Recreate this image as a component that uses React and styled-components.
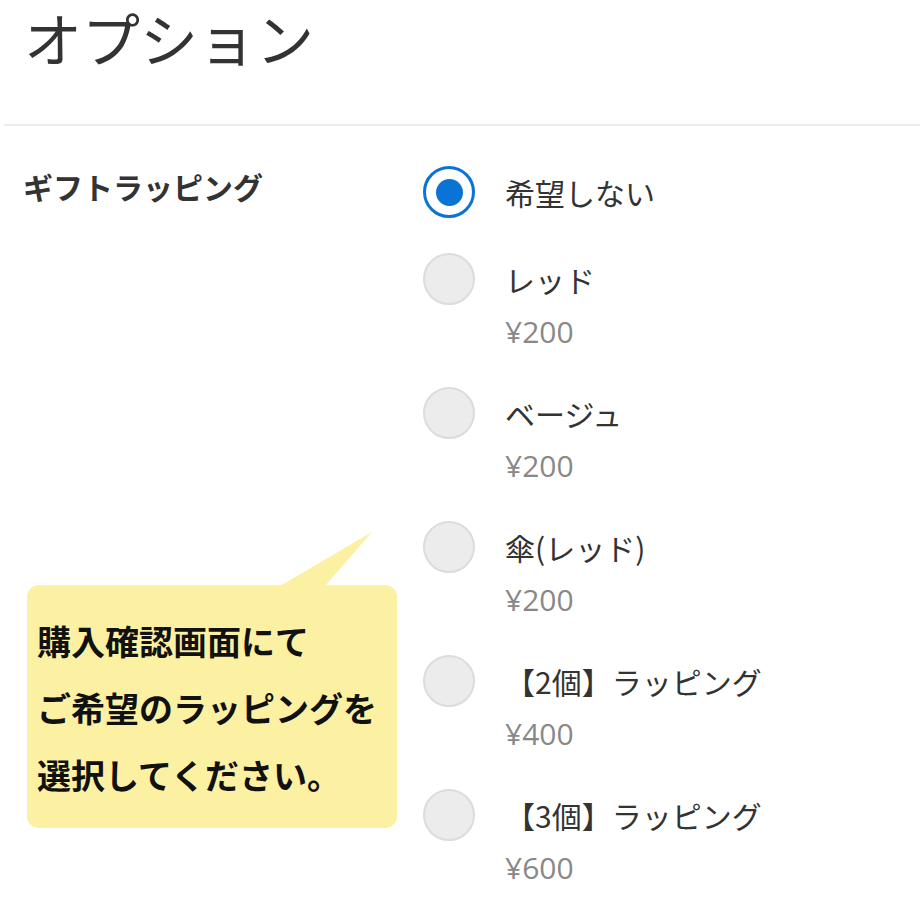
import styled, { createGlobalStyle } from "styled-components";

const GlobalStyle = createGlobalStyle`
  body {
    margin: 0;
    background: #fff;
    font-family: "Noto Sans CJK JP", "Noto Sans", sans-serif;
    color: #333;
  }
`;

const Page = styled.div`
  width: 920px;
  height: 920px;
  overflow: hidden;
`;

const Title = styled.h1`
  margin: 0 0 0 4px;
  padding: 0 0 50px 20px;
  font-size: 58px;
  line-height: 74px;
  height: 74px;
  font-weight: 400;
  color: #333;
  border-bottom: 2px solid #ececec;
`;

const Section = styled.div`
  display: grid;
  grid-template-columns: 423px 1fr;
  padding-top: 40px;
`;

const LeftColumn = styled.div`
  display: flex;
  flex-direction: column;
`;

const GroupLabel = styled.div`
  padding-left: 23px;
  font-size: 30px;
  line-height: 40px;
  font-weight: 700;
  color: #333;
`;

const Callout = styled.div`
  position: relative;
  margin: 379px 0 0 27px;
  width: 370px;
  height: 243px;
  box-sizing: border-box;
  padding: 22px 0 0 10px;
  background: #fcf0a2;
  border-radius: 12px;
  font-size: 34px;
  line-height: 67px;
  font-weight: 700;
  color: #111;
  white-space: nowrap;

  &::before {
    content: "";
    position: absolute;
    top: -53px;
    left: 253px;
    width: 92px;
    height: 54px;
    background: #fcf0a2;
    clip-path: polygon(0 54px, 92px 0, 45px 54px);
  }
`;

const OptionList = styled.div`
  display: flex;
  flex-direction: column;
  gap: 35px;
`;

const Option = styled.div`
  display: grid;
  grid-template-columns: 52px 1fr;
  column-gap: 30px;
  align-items: center;
`;

const Radio = styled.span`
  width: 52px;
  height: 52px;
  box-sizing: border-box;
  border-radius: 50%;
  display: flex;
  align-items: center;
  justify-content: center;
  border: ${(props) => (props.$checked ? "3px solid #0a74d6" : "2px solid #dcdcdc")};
  background: ${(props) => (props.$checked ? "#fff" : "#ececec")};

  &::after {
    content: "";
    display: ${(props) => (props.$checked ? "block" : "none")};
    width: 27px;
    height: 27px;
    border-radius: 50%;
    background: #0a74d6;
  }
`;

const Label = styled.span`
  font-size: 30px;
  line-height: 40px;
  color: #333;
  white-space: nowrap;
`;

const Price = styled.span`
  grid-column: 2;
  margin-top: 7px;
  font-family: "Open Sans", "Noto Sans CJK JP", sans-serif;
  font-size: 30px;
  line-height: 40px;
  color: #888;
`;

const options = [
  { label: "希望しない", checked: true },
  { label: "レッド", price: "¥200" },
  { label: "ベージュ", price: "¥200" },
  { label: "傘(レッド)", price: "¥200" },
  { label: "【2個】ラッピング", price: "¥400" },
  { label: "【3個】ラッピング", price: "¥600" },
];

export default function App() {
  return (
    <Page>
      <GlobalStyle />
      <Title>オプション</Title>
      <Section>
        <LeftColumn>
          <GroupLabel>ギフトラッピング</GroupLabel>
          <Callout>
            購入確認画面にて
            <br />
            ご希望のラッピングを
            <br />
            選択してください。
          </Callout>
        </LeftColumn>
        <OptionList>
          {options.map((option) => (
            <Option key={option.label}>
              <Radio $checked={option.checked} />
              <Label>{option.label}</Label>
              {option.price && <Price>{option.price}</Price>}
            </Option>
          ))}
        </OptionList>
      </Section>
    </Page>
  );
}
